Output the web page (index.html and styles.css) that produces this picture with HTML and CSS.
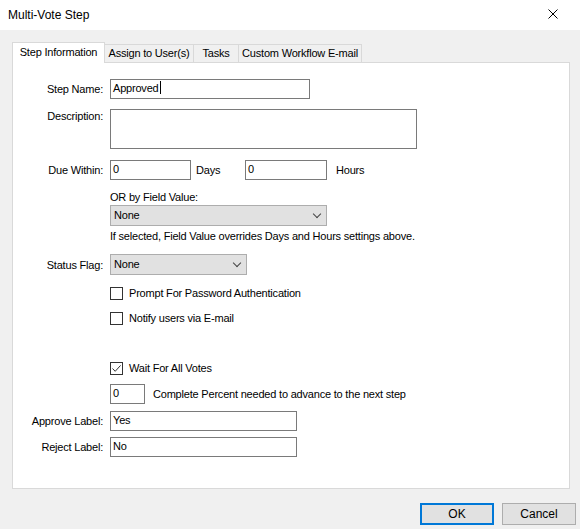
FILE: index.html
```html
<!DOCTYPE html>
<html>
	<head>
		<meta charset="utf-8" />
		<title>Multi-Vote Step</title>
		<link rel="stylesheet" href="styles.css">
	</head>
	<body>
		<div class="dialog">
			<div class="titlebar">
				<span class="title">Multi-Vote Step</span>
				<svg class="close" width="10" height="10" viewBox="0 0 10 10">
					<path d="M0.5 0.5 L9.5 9.5 M9.5 0.5 L0.5 9.5" stroke="#000" stroke-width="1" fill="none"/>
				</svg>
			</div>
			<div class="client">
				<div class="tabs">
					<div class="tab active">Step Information</div>
					<div class="tab assign">Assign to User(s)</div>
					<div class="tab tasks">Tasks</div>
					<div class="tab custom">Custom Workflow E-mail</div>
				</div>
				<div class="panel">
					<!--名称-->
					<div class="row r-name">
						<label class="lbl">Step Name:</label>
						<div class="txt w-name">Approved<span class="caret"></span></div>
					</div>
					<!--描述-->
					<div class="row r-desc">
						<label class="lbl top">Description:</label>
						<div class="txt w-desc"></div>
					</div>
					<!--期限-->
					<div class="row r-due">
						<label class="lbl">Due Within:</label>
						<div class="line">
							<div class="txt w-days">0</div>
							<span class="unit days">Days</span>
							<div class="txt w-hours">0</div>
							<span class="unit hours">Hours</span>
						</div>
					</div>
					<div class="row r-or">
						<span></span>
						<span>OR by Field Value:</span>
					</div>
					<div class="row r-field">
						<span></span>
						<div class="combo w-field">None<i class="arrow"></i></div>
					</div>
					<div class="row r-help">
						<span></span>
						<span>If selected, Field Value overrides Days and Hours settings above.</span>
					</div>
					<!--状态-->
					<div class="row r-status">
						<label class="lbl">Status Flag:</label>
						<div class="combo w-status">None<i class="arrow"></i></div>
					</div>
					<div class="row r-pwd">
						<span></span>
						<div class="check"><span class="box"></span>Prompt For Password Authentication</div>
					</div>
					<div class="row r-notify">
						<span></span>
						<div class="check"><span class="box"></span>Notify users via E-mail</div>
					</div>
					<div class="row r-wait">
						<span></span>
						<div class="check"><span class="box checked">
							<svg width="11" height="11" viewBox="0 0 11 11"><path d="M1.5 5.5 L4.2 8.3 L9.6 2.4" stroke="#333" stroke-width="1" fill="none"/></svg>
						</span>Wait For All Votes</div>
					</div>
					<div class="row r-pct">
						<span></span>
						<div class="line">
							<div class="txt w-pct">0</div>
							<span class="unit pct">Complete Percent needed to advance to the next step</span>
						</div>
					</div>
					<!--标签-->
					<div class="row r-approve">
						<label class="lbl">Approve Label:</label>
						<div class="txt w-label">Yes</div>
					</div>
					<div class="row r-reject">
						<label class="lbl">Reject Label:</label>
						<div class="txt w-label">No</div>
					</div>
				</div>
				<div class="buttons">
					<a class="btn ok">OK</a>
					<a class="btn cancel">Cancel</a>
				</div>
			</div>
		</div>
	</body>
</html>
```

FILE: styles.css
```css
*{
	margin: 0;
	padding: 0;
	box-sizing: border-box;
}
body{
	font-family: "Liberation Sans", Arial, sans-serif;
	font-size: 11px;
	letter-spacing: -0.2px;
	color: #000;
	background-color: #f0f0f0;
}
.dialog{
	width: 580px;
	height: 529px;
	background-color: #f0f0f0;
	overflow: hidden;
}
/*标题栏*/
.titlebar{
	height: 30px;
	background-color: #fff;
	display: flex;
	align-items: center;
	justify-content: space-between;
	padding-left: 8px;
	padding-right: 22px;
}
.title{
	font-size: 12px;
	letter-spacing: 0;
}
.close{
	display: block;
	margin-top: -2px;
}
.client{
	padding: 12px 10px 0 12px;
}
/*选项卡*/
.tabs{
	height: 20px;
	display: flex;
	align-items: flex-end;
}
.tab{
	height: 18px;
	border: 1px solid #d9d9d9;
	border-bottom: none;
	background-color: #f0f0f0;
	text-align: center;
	line-height: 17px;
	margin-left: -1px;
}
.tab.active{
	height: 21px;
	margin-left: 0;
	margin-bottom: -1px;
	background-color: #fff;
	position: relative;
	z-index: 1;
	width: 93px;
	line-height: 19px;
}
.tab.assign{
	width: 90px;
}
.tab.tasks{
	width: 46px;
}
.tab.custom{
	width: 124px;
}
.panel{
	height: 427px;
	border: 1px solid #d9d9d9;
	background-color: #fff;
	padding-top: 16px;
}
/*表单行*/
.row{
	display: grid;
	grid-template-columns: 90px auto;
	column-gap: 7px;
	align-items: center;
	justify-items: start;
}
.lbl{
	justify-self: end;
}
.lbl.top{
	align-self: start;
	padding-top: 1px;
}
.line{
	display: flex;
	align-items: center;
}
.txt{
	height: 20px;
	border: 1px solid #7a7a7a;
	background-color: #fff;
	padding-left: 2px;
	line-height: 17px;
	white-space: nowrap;
}
.caret{
	display: inline-block;
	width: 1px;
	height: 13px;
	background-color: #000;
	vertical-align: -2px;
	margin-left: 1px;
}
.w-name{
	width: 200px;
}
.w-desc{
	width: 307px;
	height: 40px;
}
.w-days{
	width: 81px;
}
.w-hours{
	width: 82px;
}
.w-pct{
	width: 35px;
}
.w-label{
	width: 187px;
}
.unit.days{
	width: 54px;
	padding-left: 5px;
}
.unit.hours{
	padding-left: 9px;
}
.unit.pct{
	padding-left: 8px;
}
.combo{
	height: 21px;
	border: 1px solid #adadad;
	background-color: #e1e1e1;
	padding-left: 3px;
	line-height: 19px;
	position: relative;
}
.combo .arrow{
	position: absolute;
	right: 6px;
	top: 5px;
	width: 6px;
	height: 6px;
	border-right: 1px solid #444;
	border-bottom: 1px solid #444;
	transform: rotate(45deg);
}
.w-field{
	width: 217px;
}
.w-status{
	width: 137px;
}
.check{
	display: flex;
	align-items: center;
	height: 14px;
}
.check .box{
	width: 13px;
	height: 13px;
	border: 1px solid #333;
	background-color: #fff;
	margin-right: 6px;
	display: flex;
	align-items: center;
	justify-content: center;
}
.check .box svg{
	display: block;
}
/*行距*/
.r-desc{
	margin-top: 10px;
}
.r-due{
	margin-top: 11px;
}
.r-or{
	margin-top: 10px;
	line-height: 14px;
}
.r-field{
	margin-top: 1px;
}
.r-help{
	margin-top: 3px;
	line-height: 14px;
}
.r-status{
	margin-top: 11px;
}
.r-pwd{
	margin-top: 11px;
}
.r-notify{
	margin-top: 11px;
}
.r-wait{
	margin-top: 36px;
}
.r-pct{
	margin-top: 9px;
}
.r-approve{
	margin-top: 7px;
}
.r-reject{
	margin-top: 6px;
}
/*按钮*/
.buttons{
	display: flex;
	justify-content: flex-end;
	gap: 8px;
	margin-top: 14px;
	margin-right: -6px;
}
.btn{
	width: 74px;
	height: 22px;
	border: 1px solid #adadad;
	background-color: #e1e1e1;
	text-align: center;
	line-height: 20px;
	cursor: pointer;
	font-size: 12px;
	letter-spacing: 0;
}
.btn.ok{
	border: 2px solid #0078d7;
	line-height: 18px;
}
```
